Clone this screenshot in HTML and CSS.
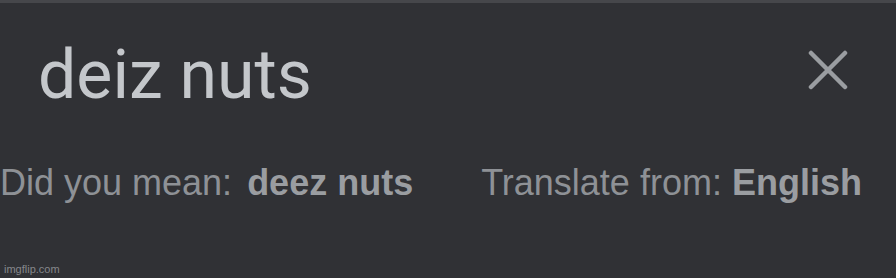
FILE: index.html
```html
<!DOCTYPE html>
<html lang="en">
<head>
    <meta charset="UTF-8">
    <title>Search</title>
    <link rel="stylesheet" href="styles.css">
</head>
<body>
    <div class="top-line"></div>
    <div class="search-row">
        <span class="query">deiz nuts</span>
        <svg class="clear-icon" width="40" height="40" viewBox="0 0 40 40">
            <path d="M3 3 L37 37 M37 3 L3 37" stroke="#9a9da1" stroke-width="4.5" stroke-linecap="round"/>
        </svg>
    </div>
    <div class="hints-row">
        <div class="hint">
            <span class="label">Did you mean:</span>
            <span class="value">deez nuts</span>
        </div>
        <div class="hint translate">
            <span class="label">Translate from:</span>
            <span class="value">English</span>
        </div>
    </div>
    <div class="watermark">imgflip.com</div>
</body>
</html>
```

FILE: styles.css
```css
* {
    margin: 0;
    padding: 0;
    box-sizing: border-box;
}

body {
    width: 896px;
    height: 278px;
    overflow: hidden;
    background: #303135;
    display: flex;
    flex-direction: column;
    font-family: 'Liberation Sans', Arial, sans-serif;
}

.top-line {
    height: 3px;
    background: #46474b;
}

.search-row {
    display: flex;
    align-items: center;
    justify-content: space-between;
    height: 134px;
    padding: 0 48px 0 38px;
}

.query {
    padding-top: 10px;
    font-family: 'Roboto', sans-serif;
    font-size: 68px;
    color: #c4c7cb;
}

.hints-row {
    display: flex;
    align-items: baseline;
    gap: 68px;
    padding-top: 25px;
}

.hint {
    display: flex;
    align-items: baseline;
    gap: 15px;
    font-size: 36px;
    color: #8e9196;
}

.translate {
    gap: 10px;
}

.value {
    font-weight: bold;
    color: #9a9da1;
}

.watermark {
    margin-top: auto;
    padding: 0 0 3px 4px;
    font-size: 11px;
    color: #85878b;
}
```
